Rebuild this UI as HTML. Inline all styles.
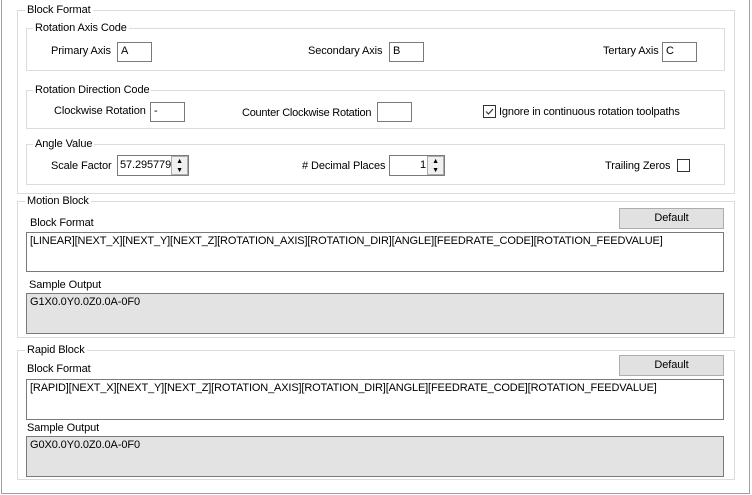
<!DOCTYPE html>
<html><head><style>
*{margin:0;padding:0;box-sizing:border-box}
body{width:752px;height:495px;background:#fff;font-family:"Liberation Sans",sans-serif;font-size:11px;color:#000;position:relative;overflow:hidden;letter-spacing:-0.1px}
.a{position:absolute;white-space:nowrap}
.g{position:absolute;border:1px solid #dcdcdc}
.lg{position:absolute;background:#fff;padding:0 2px;line-height:12px}
.tb{position:absolute;border:1px solid #7a7a7a;background:#fff;padding:2px 3px;line-height:13px;white-space:nowrap;overflow:hidden}
.ro{background:#e3e3e3}
.btn{position:absolute;border:1px solid #adadad;background:#e1e1e1;text-align:center;line-height:18px}
.cb{position:absolute;width:13px;height:13px;border:1px solid #333;background:#fff}
.sp{position:absolute;border:1px solid #adadad;background:#fff}
</style></head><body>
<div class="a" style="left:1px;top:-2px;width:749px;height:496px;border:1px solid #a0a0a0"></div>

<div class="g" style="left:17px;top:10px;width:718px;height:184px"></div>
<div class="lg" style="left:25px;top:4px">Block Format</div>

<div class="g" style="left:26px;top:28px;width:699px;height:43px"></div>
<div class="lg" style="left:33px;top:22px">Rotation Axis Code</div>
<div class="a" style="left:51px;top:45px">Primary Axis</div>
<div class="tb" style="left:117px;top:42px;width:35px;height:20px">A</div>
<div class="a" style="left:308px;top:45px">Secondary Axis</div>
<div class="tb" style="left:389px;top:42px;width:35px;height:20px">B</div>
<div class="a" style="left:603px;top:45px">Tertary Axis</div>
<div class="tb" style="left:662px;top:42px;width:35px;height:20px">C</div>

<div class="g" style="left:26px;top:90px;width:699px;height:39px"></div>
<div class="lg" style="left:33px;top:84px">Rotation Direction Code</div>
<div class="a" style="left:54px;top:105px">Clockwise Rotation</div>
<div class="tb" style="left:150px;top:102px;width:35px;height:20px">-</div>
<div class="a" style="left:242px;top:107px;letter-spacing:-0.25px">Counter Clockwise Rotation</div>
<div class="tb" style="left:377px;top:102px;width:35px;height:20px"></div>
<div class="cb" style="left:483px;top:105px"><svg width="11" height="11" style="position:absolute;left:0;top:0"><path d="M2 5.5 L4.5 8 L9 3" stroke="#333" stroke-width="1.2" fill="none"/></svg></div>
<div class="a" style="left:499px;top:106px;letter-spacing:-0.15px">Ignore in continuous rotation toolpaths</div>

<div class="g" style="left:26px;top:144px;width:699px;height:41px"></div>
<div class="lg" style="left:33px;top:138px">Angle Value</div>
<div class="a" style="left:51px;top:160px">Scale Factor</div>
<div class="tb" style="left:117px;top:155px;width:72px;height:21px;padding:3px 2px">57.295779</div>
<div class="sp" style="left:171px;top:156px;width:17px;height:19px;background:#f0f0f0;font-size:7px;line-height:9px;text-align:center">▲<br>▼</div>
<div class="a" style="left:302px;top:160px"># Decimal Places</div>
<div class="tb" style="left:389px;top:155px;width:56px;height:21px;padding:3px 18px 0 0;text-align:right">1</div>
<div class="sp" style="left:427px;top:156px;width:17px;height:19px;background:#f0f0f0;font-size:7px;line-height:9px;text-align:center">▲<br>▼</div>
<div class="a" style="left:605px;top:160px">Trailing Zeros</div>
<div class="cb" style="left:677px;top:159px"></div>

<div class="g" style="left:17px;top:201px;width:718px;height:137px"></div>
<div class="lg" style="left:25px;top:195px">Motion Block</div>
<div class="btn" style="left:619px;top:208px;width:105px;height:21px">Default</div>
<div class="a" style="left:30px;top:217px">Block Format</div>
<div class="tb" style="left:26px;top:232px;width:698px;height:40px;letter-spacing:-0.15px">[LINEAR][NEXT_X][NEXT_Y][NEXT_Z][ROTATION_AXIS][ROTATION_DIR][ANGLE][FEEDRATE_CODE][ROTATION_FEEDVALUE]</div>
<div class="a" style="left:29px;top:279px">Sample Output</div>
<div class="tb ro" style="left:26px;top:293px;width:698px;height:41px">G1X0.0Y0.0Z0.0A-0F0</div>

<div class="g" style="left:17px;top:350px;width:718px;height:130px"></div>
<div class="lg" style="left:25px;top:344px">Rapid Block</div>
<div class="btn" style="left:619px;top:355px;width:105px;height:21px">Default</div>
<div class="a" style="left:27px;top:363px">Block Format</div>
<div class="tb" style="left:26px;top:379px;width:698px;height:41px;letter-spacing:-0.15px">[RAPID][NEXT_X][NEXT_Y][NEXT_Z][ROTATION_AXIS][ROTATION_DIR][ANGLE][FEEDRATE_CODE][ROTATION_FEEDVALUE]</div>
<div class="a" style="left:27px;top:422px">Sample Output</div>
<div class="tb ro" style="left:26px;top:436px;width:698px;height:41px">G0X0.0Y0.0Z0.0A-0F0</div>
</body></html>
